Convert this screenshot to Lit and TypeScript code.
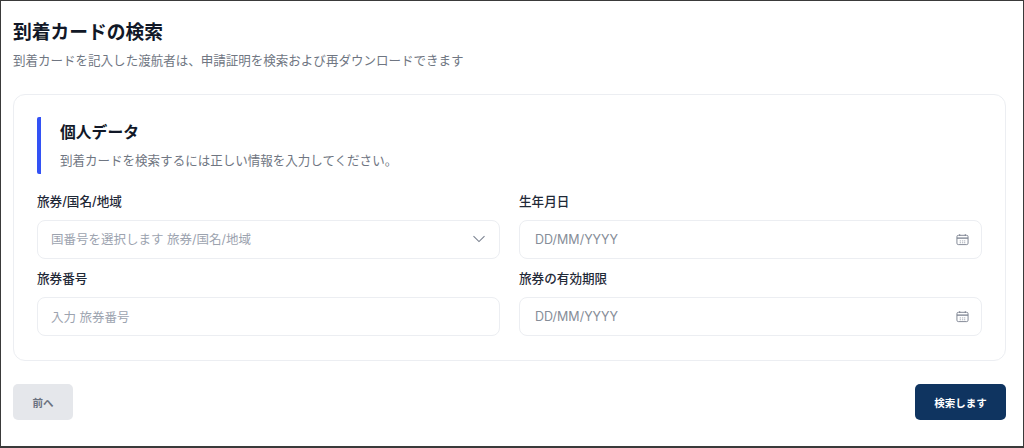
import { LitElement, html, css } from "lit";
import { customElement } from "lit/decorators.js";

const calendar = html`<svg class="icon" width="13" height="13" viewBox="0 0 14 14" fill="none" stroke="#7b8290" stroke-width="1">
  <rect x="1" y="2.5" width="12" height="10" rx="1.5"></rect>
  <path d="M1 5.5h12" stroke-width="1.4"></path>
  <path d="M4 1.2v2M10 1.2v2"></path>
  <path d="M4 8.5h1.4M6.4 8.5h1.4M8.6 8.5h1.4M4 10.5h1.4M6.4 10.5h1.4M8.6 10.5h1.4" stroke="#a5abb5"></path>
</svg>`;

const chevron = html`<svg class="chev" width="14" height="8" viewBox="0 0 14 8" fill="none" stroke="#7b8290" stroke-width="1.1">
  <path d="M1.5 1.2 7 6.6l5.5-5.4"></path>
</svg>`;

@customElement("app-root")
export class AppRoot extends LitElement {
  static styles = css`
    :host {
      display: block;
      box-sizing: border-box;
      width: 1024px;
      height: 448px;
      overflow: hidden;
      background: #fff;
      border: 1px solid #3a3a3a;
      border-bottom-width: 2px;
      font-family: Inter, "Noto Sans CJK JP", sans-serif;
      color: #111827;
    }
    .page {
      display: flex;
      flex-direction: column;
      padding: 19px 17px 0 12px;
    }
    h1 {
      margin: 0;
      font-size: 18.75px;
      line-height: 25px;
      font-weight: 700;
      color: #111827;
    }
    .sub {
      margin: 7px 0 0;
      font-size: 12.53px;
      line-height: 18px;
      color: #6f7682;
    }
    .card {
      margin-top: 24px;
      height: 267px;
      box-sizing: border-box;
      border: 1px solid #eceef2;
      border-radius: 12px;
      padding: 22px 23px 0;
    }
    .head {
      border-left: 4px solid #3352f5;
      border-radius: 2px;
      height: 57px;
      box-sizing: border-box;
      padding-left: 19px;
    }
    h2 {
      margin: 0;
      padding-top: 5px;
      font-size: 15.8px;
      line-height: 22px;
      font-weight: 700;
      color: #111827;
    }
    .desc {
      margin: 8px 0 0;
      font-size: 12.53px;
      line-height: 18px;
      color: #6f7682;
    }
    .grid {
      display: grid;
      grid-template-columns: 463px 463px;
      column-gap: 19px;
      row-gap: 11px;
      margin-top: 19px;
    }
    label {
      display: block;
      font-size: 12.6px;
      line-height: 18px;
      font-weight: 500;
      color: #1f2937;
      margin-bottom: 9px;
    }
    .input {
      display: flex;
      align-items: center;
      justify-content: space-between;
      box-sizing: border-box;
      height: 39px;
      border: 1px solid #eceef2;
      border-radius: 8px;
      padding: 0 13px;
      font-size: 12.5px;
      color: #9ca3af;
    }
    .select {
      padding-bottom: 2px;
    }
    .date {
      padding-left: 15px;
      padding-right: 12px;
      color: #868d98;
    }
    .actions {
      display: flex;
      justify-content: space-between;
      margin-top: 23px;
    }
    button {
      height: 36px;
      border: 0;
      border-radius: 5px;
      font-family: inherit;
      font-size: 10.5px;
      font-weight: 600;
      padding: 0;
    }
    .back {
      width: 60px;
      background: #e5e7eb;
      color: #6b7280;
    }
    .search {
      width: 91px;
      background: #0f3460;
      color: #fff;
    }
  `;

  render() {
    return html`
      <div class="page">
        <h1>到着カードの検索</h1>
        <p class="sub">到着カードを記入した渡航者は、申請証明を検索および再ダウンロードできます</p>
        <section class="card">
          <div class="head">
            <h2>個人データ</h2>
            <p class="desc">到着カードを検索するには正しい情報を入力してください。</p>
          </div>
          <div class="grid">
            <div>
              <label>旅券/国名/地域</label>
              <div class="input select"><span>国番号を選択します 旅券/国名/地域</span>${chevron}</div>
            </div>
            <div>
              <label>生年月日</label>
              <div class="input date"><span>DD/MM/YYYY</span>${calendar}</div>
            </div>
            <div>
              <label>旅券番号</label>
              <div class="input"><span>入力 旅券番号</span></div>
            </div>
            <div>
              <label>旅券の有効期限</label>
              <div class="input date"><span>DD/MM/YYYY</span>${calendar}</div>
            </div>
          </div>
        </section>
        <div class="actions">
          <button class="back">前へ</button>
          <button class="search">検索します</button>
        </div>
      </div>
    `;
  }
}
